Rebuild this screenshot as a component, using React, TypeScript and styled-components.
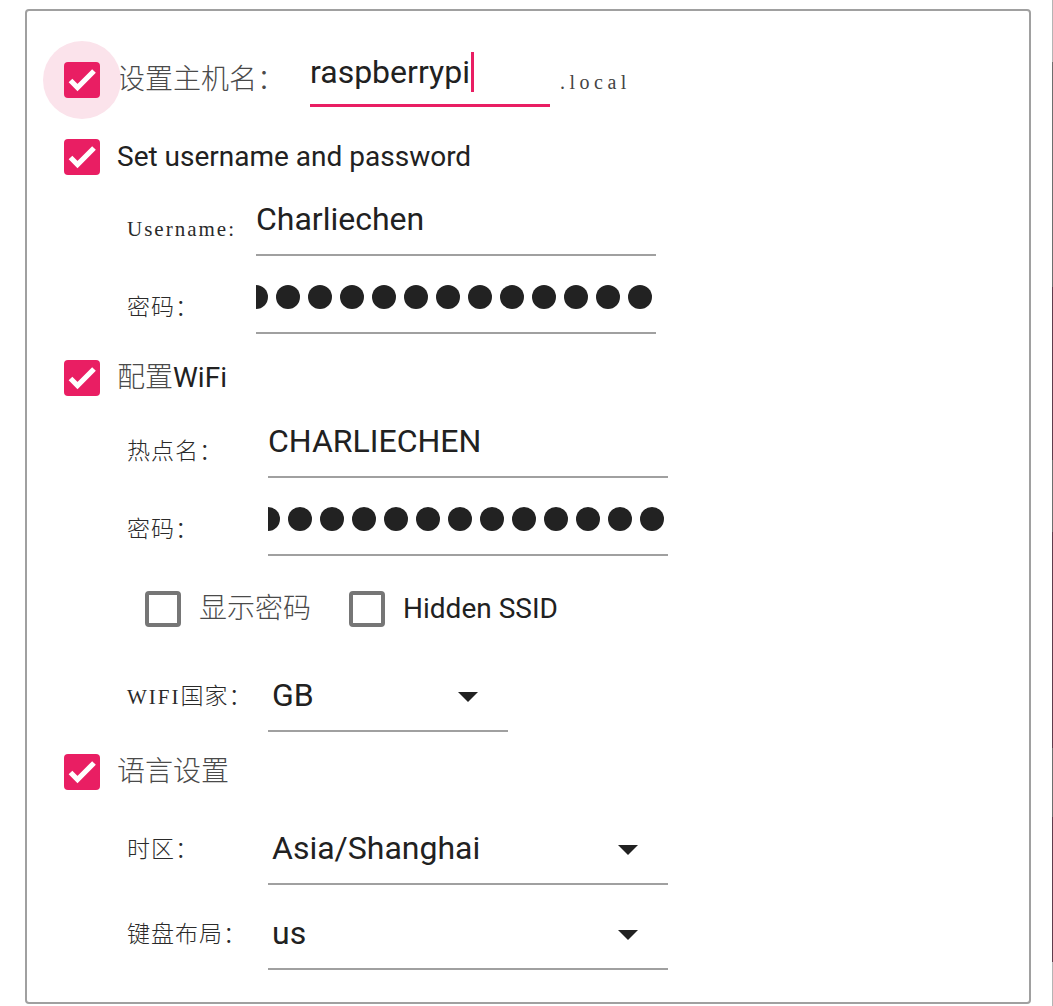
import React from "react";
import styled, { createGlobalStyle } from "styled-components";

const GlobalStyle = createGlobalStyle`
  html, body { margin: 0; padding: 0; background: #ffffff; }
  body { font-family: Roboto, "Noto Sans CJK SC", sans-serif; }
  * { box-sizing: border-box; }
`;

const PINK = "#e91e63";
const LINE = "#a0a0a0";

const Page = styled.div`
  display: flex;
  width: 1053px;
  height: 1006px;
  overflow: hidden;
`;

const Main = styled.div`
  flex: 1;
  padding: 9px 0 0 25px;
`;

const Edge = styled.div`
  width: 1px;
  height: 1006px;
  background: linear-gradient(
    to bottom,
    #b4b4b4 0px, #b4b4b4 62px,
    #6e6e6e 62px, #6e6e6e 287px,
    #5e3d4c 287px, #5e3d4c 460px,
    #6e6e6e 460px, #6e6e6e 532px,
    #5e3d4c 532px, #5e3d4c 748px,
    #6e6e6e 748px, #6e6e6e 817px,
    #5e3d4c 817px, #5e3d4c 962px,
    #b4b4b4 962px, #b4b4b4 1006px
  );
`;

const Panel = styled.div`
  width: 1006px;
  height: 995px;
  border: 2px solid ${LINE};
  border-radius: 4px;
  padding: 30px 0 0 37px;
  display: flex;
  flex-direction: column;
`;

const CheckRow = styled.div<{ $h: number; $mb?: number }>`
  display: flex;
  align-items: center;
  height: ${(p) => p.$h}px;
  margin-bottom: ${(p) => p.$mb ?? 0}px;
`;

const BoxWrap = styled.span`
  position: relative;
  display: inline-flex;
  flex: none;
  width: 36px;
  height: 36px;
`;

const Ripple = styled.span`
  position: absolute;
  left: -21px;
  top: -21px;
  width: 78px;
  height: 78px;
  border-radius: 50%;
  background: #fbe3eb;
`;

const Box = styled.span<{ $checked: boolean }>`
  position: relative;
  display: flex;
  align-items: center;
  justify-content: center;
  width: 36px;
  height: 36px;
  border-radius: 4px;
  background: ${(p) => (p.$checked ? PINK : "#ffffff")};
  border: ${(p) => (p.$checked ? "none" : "4px solid #767676")};
`;

const CheckLabel = styled.span<{ $w?: number; $gap?: number }>`
  margin-left: ${(p) => p.$gap ?? 17}px;
  ${(p) => (p.$w ? `width: ${p.$w}px;` : "")}
  font-family: Roboto, "Noto Sans CJK SC", sans-serif;
  font-size: 28px;
  line-height: 36px;
  color: #212121;
  white-space: nowrap;
`;

const Han = styled.span`
  color: #4a4a4a;
  font-weight: 300;
`;

const HostField = styled.div`
  align-self: flex-start;
  margin-top: 11px;
  width: 240px;
  height: 55px;
  padding-bottom: 12px;
  border-bottom: 3px solid ${PINK};
  display: flex;
  align-items: center;
`;

const InputText = styled.span`
  font-family: Roboto, sans-serif;
  font-size: 32px;
  line-height: 40px;
  color: #212121;
  white-space: nowrap;
`;

const Caret = styled.span`
  width: 3px;
  height: 40px;
  margin-left: 1px;
  background: ${PINK};
`;

const Suffix = styled.span`
  align-self: flex-start;
  margin: 29px 0 0 10px;
  font-family: "Liberation Serif", serif;
  font-size: 20px;
  letter-spacing: 4.5px;
  line-height: 24px;
  color: #444444;
`;

const FieldRow = styled.div<{ $h?: number }>`
  display: flex;
  align-items: flex-start;
  height: ${(p) => p.$h ?? 78}px;
  padding-left: 63px;
`;

const FieldLabel = styled.span<{ $w: number; $top: number }>`
  flex: none;
  width: ${(p) => p.$w}px;
  margin-top: ${(p) => p.$top}px;
  font-family: "Liberation Serif", "Noto Sans CJK SC", serif;
  font-size: 21px;
  letter-spacing: 2px;
  line-height: 26px;
  color: #2a2a2a;
  white-space: nowrap;
`;

const LabelHan = styled.span`
  font-family: "Noto Sans CJK SC", sans-serif;
  font-size: 23px;
  letter-spacing: 1px;
  font-weight: 300;
`;

const Field = styled.div<{ $w: number }>`
  width: ${(p) => p.$w}px;
  height: 62px;
  padding-bottom: 10px;
  border-bottom: 2px solid ${LINE};
  overflow: hidden;
  display: flex;
  align-items: center;
  font-family: Roboto, sans-serif;
  font-size: 32px;
  line-height: 50px;
  color: #212121;
  white-space: nowrap;
`;

const Dots = styled.span`
  display: flex;
  gap: 8px;
  margin-left: -12px;
`;

const Dot = styled.span`
  flex: none;
  width: 24px;
  height: 24px;
  border-radius: 50%;
  background: #222222;
`;

const Select = styled(Field)`
  justify-content: space-between;
  padding-left: 4px;
  padding-right: 30px;
`;

const Arrow = styled.span`
  width: 0;
  height: 0;
  margin-top: 4px;
  border-left: 10px solid transparent;
  border-right: 10px solid transparent;
  border-top: 10px solid #212121;
`;

const OptionsRow = styled.div`
  display: flex;
  align-items: center;
  height: 74px;
  margin-bottom: 24px;
  padding-left: 81px;
`;

const Option = styled.span<{ $ml?: number }>`
  display: flex;
  align-items: center;
  margin-left: ${(p) => p.$ml ?? 0}px;
`;

function Checkbox({ checked, ripple }: { checked: boolean; ripple?: boolean }) {
  return (
    <BoxWrap>
      {ripple && <Ripple />}
      <Box $checked={checked}>
        {checked && (
          <svg width="36" height="36" viewBox="0 0 36 36">
            <polyline
              points="6.5,18.5 13.5,25.5 30,9"
              fill="none"
              stroke="#ffffff"
              strokeWidth="5.2"
            />
          </svg>
        )}
      </Box>
    </BoxWrap>
  );
}

function Password() {
  return (
    <Dots>
      {Array.from({ length: 13 }).map((_, i) => (
        <Dot key={i} />
      ))}
    </Dots>
  );
}

export default function App() {
  return (
    <>
      <GlobalStyle />
      <Page>
        <Main>
          <Panel>
            <CheckRow $h={78}>
              <Checkbox checked ripple />
              <CheckLabel $w={193}>
                <Han>设置主机名：</Han>
              </CheckLabel>
              <HostField>
                <InputText>raspberrypi</InputText>
                <Caret />
              </HostField>
              <Suffix>.local</Suffix>
            </CheckRow>

            <CheckRow $h={75}>
              <Checkbox checked />
              <CheckLabel>Set username and password</CheckLabel>
            </CheckRow>

            <FieldRow>
              <FieldLabel $w={129} $top={22}>Username:</FieldLabel>
              <Field $w={400}>Charliechen</Field>
            </FieldRow>
            <FieldRow>
              <FieldLabel $w={129} $top={20}>
                <LabelHan>密码：</LabelHan>
              </FieldLabel>
              <Field $w={400}>
                <Password />
              </Field>
            </FieldRow>

            <CheckRow $h={56} $mb={10}>
              <Checkbox checked />
              <CheckLabel>
                <Han>配置</Han>WiFi
              </CheckLabel>
            </CheckRow>

            <FieldRow>
              <FieldLabel $w={141} $top={20}>
                <LabelHan>热点名：</LabelHan>
              </FieldLabel>
              <Field $w={400}>CHARLIECHEN</Field>
            </FieldRow>
            <FieldRow>
              <FieldLabel $w={141} $top={20}>
                <LabelHan>密码：</LabelHan>
              </FieldLabel>
              <Field $w={400}>
                <Password />
              </Field>
            </FieldRow>

            <OptionsRow>
              <Option>
                <Checkbox checked={false} />
                <CheckLabel $gap={18}>
                  <Han>显示密码</Han>
                </CheckLabel>
              </Option>
              <Option $ml={38}>
                <Checkbox checked={false} />
                <CheckLabel $gap={18}>Hidden SSID</CheckLabel>
              </Option>
            </OptionsRow>

            <FieldRow>
              <FieldLabel $w={141} $top={11}>
                WIFI<LabelHan>国家：</LabelHan>
              </FieldLabel>
              <Select $w={240}>
                GB
                <Arrow />
              </Select>
            </FieldRow>

            <CheckRow $h={48} $mb={27}>
              <Checkbox checked />
              <CheckLabel>
                <Han>语言设置</Han>
              </CheckLabel>
            </CheckRow>

            <FieldRow $h={85}>
              <FieldLabel $w={141} $top={11}>
                <LabelHan>时区：</LabelHan>
              </FieldLabel>
              <Select $w={400}>
                Asia/Shanghai
                <Arrow />
              </Select>
            </FieldRow>
            <FieldRow $h={85}>
              <FieldLabel $w={141} $top={11}>
                <LabelHan>键盘布局：</LabelHan>
              </FieldLabel>
              <Select $w={400}>
                us
                <Arrow />
              </Select>
            </FieldRow>
          </Panel>
        </Main>
        <Edge />
      </Page>
    </>
  );
}
